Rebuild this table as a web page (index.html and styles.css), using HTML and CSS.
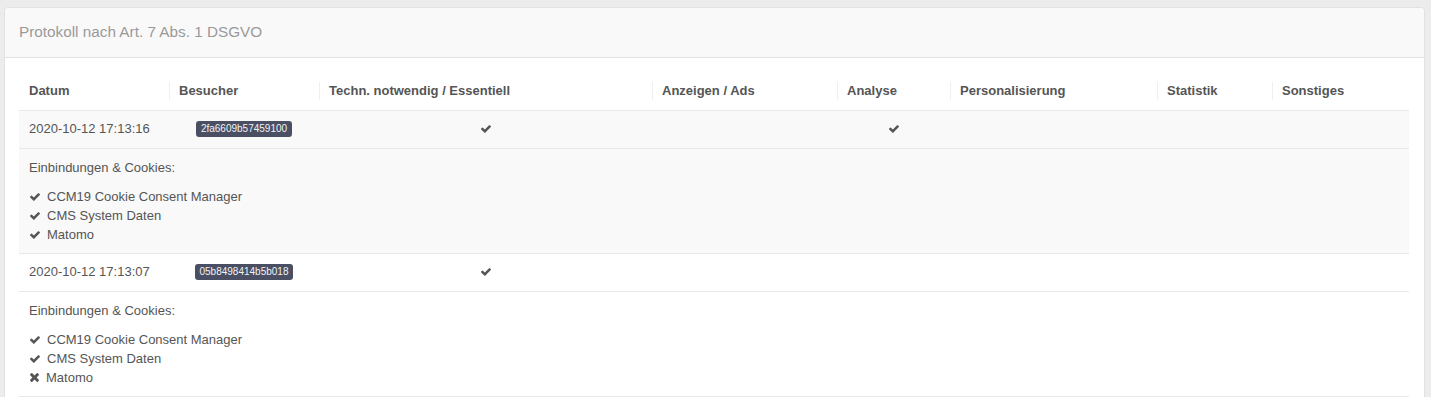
FILE: index.html
```html
<!DOCTYPE html>
<html lang="de">
<head>
<meta charset="utf-8">
<title>Protokoll</title>
<link rel="stylesheet" href="styles.css">
</head>
<body>
<div class="card">
  <div class="card-header">Protokoll nach Art. 7 Abs. 1 DSGVO</div>
  <div class="card-body">
    <table class="log">
      <colgroup>
        <col style="width:150px"><col style="width:150px"><col style="width:333px"><col style="width:185px"><col style="width:113px"><col style="width:207px"><col style="width:115px"><col style="width:137px">
      </colgroup>
      <thead>
        <tr>
          <th>Datum</th>
          <th>Besucher</th>
          <th>Techn. notwendig / Essentiell</th>
          <th>Anzeigen / Ads</th>
          <th>Analyse</th>
          <th>Personalisierung</th>
          <th>Statistik</th>
          <th>Sonstiges</th>
        </tr>
      </thead>
      <tbody>
        <tr class="odd">
          <td>2020-10-12 17:13:16</td>
          <td class="center"><span class="badge">2fa6609b57459100</span></td>
          <td class="center"><svg class="ico-check" viewBox="121 334 1550 1188"><path d="M1671 566q0 40-28 68l-724 724-136 136q-28 28-68 28t-68-28l-136-136-362-362q-28-28-28-68t28-68l136-136q28-28 68-28t68 28l294 295 656-657q28-28 68-28t68 28l136 136q28 28 28 68z"/></svg></td>
          <td></td>
          <td class="center"><svg class="ico-check" viewBox="121 334 1550 1188"><path d="M1671 566q0 40-28 68l-724 724-136 136q-28 28-68 28t-68-28l-136-136-362-362q-28-28-28-68t28-68l136-136q28-28 68-28t68 28l294 295 656-657q28-28 68-28t68 28l136 136q28 28 28 68z"/></svg></td>
          <td></td>
          <td></td>
          <td></td>
        </tr>
        <tr class="odd detail">
          <td colspan="8">
            <p class="detail-title">Einbindungen &amp; Cookies:</p>
            <ul class="items">
              <li><svg class="ico-li" viewBox="121 334 1550 1188"><path d="M1671 566q0 40-28 68l-724 724-136 136q-28 28-68 28t-68-28l-136-136-362-362q-28-28-28-68t28-68l136-136q28-28 68-28t68 28l294 295 656-657q28-28 68-28t68 28l136 136q28 28 28 68z"/></svg>CCM19 Cookie Consent Manager</li>
              <li><svg class="ico-li" viewBox="121 334 1550 1188"><path d="M1671 566q0 40-28 68l-724 724-136 136q-28 28-68 28t-68-28l-136-136-362-362q-28-28-28-68t28-68l136-136q28-28 68-28t68 28l294 295 656-657q28-28 68-28t68 28l136 136q28 28 28 68z"/></svg>CMS System Daten</li>
              <li><svg class="ico-li" viewBox="121 334 1550 1188"><path d="M1671 566q0 40-28 68l-724 724-136 136q-28 28-68 28t-68-28l-136-136-362-362q-28-28-28-68t28-68l136-136q28-28 68-28t68 28l294 295 656-657q28-28 68-28t68 28l136 136q28 28 28 68z"/></svg>Matomo</li>
            </ul>
          </td>
        </tr>
        <tr>
          <td>2020-10-12 17:13:07</td>
          <td class="center"><span class="badge">05b8498414b5b018</span></td>
          <td class="center"><svg class="ico-check" viewBox="121 334 1550 1188"><path d="M1671 566q0 40-28 68l-724 724-136 136q-28 28-68 28t-68-28l-136-136-362-362q-28-28-28-68t28-68l136-136q28-28 68-28t68 28l294 295 656-657q28-28 68-28t68 28l136 136q28 28 28 68z"/></svg></td>
          <td></td>
          <td></td>
          <td></td>
          <td></td>
          <td></td>
        </tr>
        <tr class="detail">
          <td colspan="8">
            <p class="detail-title">Einbindungen &amp; Cookies:</p>
            <ul class="items">
              <li><svg class="ico-li" viewBox="121 334 1550 1188"><path d="M1671 566q0 40-28 68l-724 724-136 136q-28 28-68 28t-68-28l-136-136-362-362q-28-28-28-68t28-68l136-136q28-28 68-28t68 28l294 295 656-657q28-28 68-28t68 28l136 136q28 28 28 68z"/></svg>CCM19 Cookie Consent Manager</li>
              <li><svg class="ico-li" viewBox="121 334 1550 1188"><path d="M1671 566q0 40-28 68l-724 724-136 136q-28 28-68 28t-68-28l-136-136-362-362q-28-28-28-68t28-68l136-136q28-28 68-28t68 28l294 295 656-657q28-28 68-28t68 28l136 136q28 28 28 68z"/></svg>CMS System Daten</li>
              <li><svg class="ico-x" viewBox="302 366 1188 1188"><path d="M1490 1322q0 40-28 68l-136 136q-28 28-68 28t-68-28l-294-294-294 294q-28 28-68 28t-68-28l-136-136q-28-28-28-68t28-68l294-294-294-294q-28-28-28-68t28-68l136-136q28-28 68-28t68 28l294 294 294-294q28-28 68-28t68 28l136 136q28 28 28 68t-28 68l-294 294 294 294q28 28 28 68z"/></svg>Matomo</li>
            </ul>
          </td>
        </tr>
      </tbody>
    </table>
  </div>
</div>
</body>
</html>
```

FILE: styles.css
```css
html, body {
  margin: 0;
  padding: 0;
}

body {
  background: #ececec;
  font-family: "Liberation Sans", Arial, Helvetica, sans-serif;
  font-size: 13px;
  color: #555;
  padding: 7px 6px 0 4px;
}

.card {
  background: #fff;
  border: 1px solid #e2e2e2;
  border-radius: 4px;
  width: 1419px;
}

.card-header {
  background: #f9f9f9;
  border-bottom: 1px solid #e3e3e3;
  border-radius: 4px 4px 0 0;
  padding: 14px 14px 15px;
  font-size: 15.3px;
  line-height: 20px;
  color: #999;
}

.card-body {
  padding: 14px 15px 15px 14px;
}

.log {
  width: 1390px;
  table-layout: fixed;
  border-collapse: separate;
  border-spacing: 0;
}

.log th {
  position: relative;
  text-align: left;
  font-weight: bold;
  color: #555;
  padding: 10px 10px;
  line-height: 18px;
}

.log th + th::before {
  content: "";
  position: absolute;
  left: 0;
  top: 10px;
  bottom: 10px;
  width: 1px;
  background: #efefef;
}

.log td {
  border-top: 1px solid #e8e8e8;
  padding: 9px 10px 10px;
  line-height: 18px;
  vertical-align: middle;
  color: #555;
  white-space: nowrap;
}

.log tr.detail td {
  padding-bottom: 9px;
}

.log tbody tr:last-child td {
  border-bottom: 1px solid #e8e8e8;
}

.log tr.odd td {
  background: #f9f9f9;
}

.center {
  text-align: center;
}

.badge {
  display: inline-block;
  background: #4a4f63;
  color: #f2f2f2;
  font-size: 10px;
  line-height: 12px;
  padding: 2px 5px;
  border-radius: 3px;
  vertical-align: 1px;
}

.ico-check {
  width: 10px;
  height: 8px;
  fill: #555;
  vertical-align: 0;
}

.detail-title {
  margin: 0 0 10px;
  line-height: 19px;
}

.items {
  list-style: none;
  margin: 0;
  padding: 0;
}

.items li {
  display: flex;
  align-items: center;
  line-height: 19px;
  height: 19px;
}

.ico-li {
  width: 10px;
  height: 8px;
  fill: #555;
  margin: 0 7px 0 1px;
}

.ico-x {
  width: 9px;
  height: 9px;
  fill: #555;
  margin: 0 7px 0 1px;
}
```
